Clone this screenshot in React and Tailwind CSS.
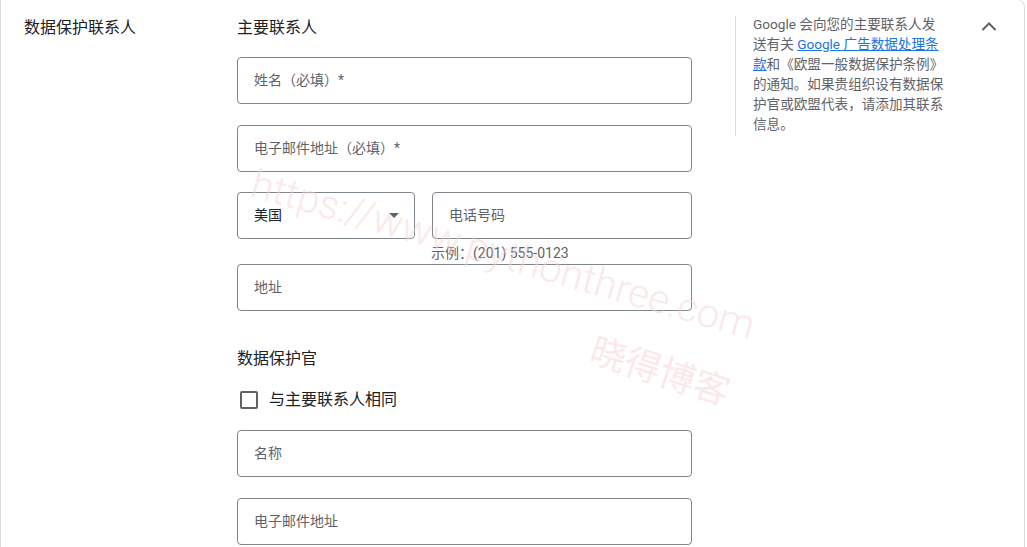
import { useState } from "react";

const font = { fontFamily: "Roboto, 'Noto Sans CJK SC', sans-serif" };

const Field = ({ label, className = "" }) => (
  <div
    className={`h-[47px] rounded border border-[#80868b] flex items-center px-4 text-[14px] text-[#5f6368] ${className}`}
  >
    {label}
  </div>
);

const App = () => {
  const [same, setSame] = useState(false);

  return (
    <div className="relative w-[1027px] h-[547px] bg-white overflow-hidden" style={font}>
      <div className="w-[1025px] h-[560px] bg-white border-l border-r border-[#dadce0] rounded-tr-lg shadow-[0_-1px_0_#eeeeee] flex">
        {/* left title */}
        <div className="w-[236px] pl-[23px] pt-[18px]">
          <h2 className="text-[16px] leading-5 text-[#202124]">数据保护联系人</h2>
        </div>

        {/* form */}
        <div className="w-[455px] pt-[18px] flex flex-col">
          <h3 className="text-[16px] leading-5 h-5 text-[#202124]">主要联系人</h3>
          <Field label="姓名（必填）*" className="mt-[19px]" />
          <Field label="电子邮件地址（必填）*" className="mt-[21px]" />
          <div className="flex gap-[17px] mt-[20px]">
            <div className="w-[178px] h-[47px] rounded border border-[#80868b] flex items-center justify-between pl-4 pr-[15px] text-[14px] text-[#202124]">
              <span>美国</span>
              <span className="w-0 h-0 border-l-[5px] border-r-[5px] border-t-[5px] border-l-transparent border-r-transparent border-t-[#5f6368]" />
            </div>
            <Field label="电话号码" className="flex-1" />
          </div>
          <div className="h-[25px] pt-[4px] pl-[194px] text-[14px] leading-5 text-[#5f6368]">
            示例：(201) 555-0123
          </div>
          <Field label="地址" />
          <h3 className="mt-[38px] text-[16px] leading-5 h-5 text-[#202124]">数据保护官</h3>
          <label className="mt-[21px] h-5 flex items-center gap-[11px] cursor-pointer">
            <button
              type="button"
              onClick={() => setSame(!same)}
              className="ml-[3px] w-[18px] h-[18px] rounded-[2px] border-2 border-[#5f6368] bg-white"
            />
            <span className="text-[16px] text-[#202124]">与主要联系人相同</span>
          </label>
          <Field label="名称" className="mt-[20px]" />
          <Field label="电子邮件地址" className="mt-[21px]" />
        </div>

        {/* help text */}
        <div className="ml-[43px] mt-[16px] h-[120px] border-l border-[#dadce0] pl-[17px]">
          <p className="w-[215px] -mt-[2px] text-[13.6px] leading-5 text-[#5f6368]">
            Google 会向您的主要联系人发
            <br />
            送有关{" "}
            <a href="#" className="text-[#1a73e8] underline">
              Google 广告数据处理条
              <br />款
            </a>
            和《欧盟一般数据保护条例》
            <br />
            的通知。如果贵组织设有数据保
            <br />
            护官或欧盟代表，请添加其联系
            <br />
            信息。
          </p>
        </div>

        <div className="ml-[13px] pt-[21px]">
          <svg width="16" height="10" viewBox="0 0 16 10" fill="none">
            <polyline points="1.5,9 8,2.5 14.5,9" stroke="#5f6368" strokeWidth="2" />
          </svg>
        </div>
      </div>

      {/* watermarks */}
      <div className="pointer-events-none absolute left-[503px] top-[255px] -translate-x-1/2 -translate-y-1/2 rotate-[16deg] whitespace-nowrap text-[40px] font-light text-[#f9d3d7] opacity-50">
        https://www.pythonthree.com
      </div>
      <div className="pointer-events-none absolute left-[660px] top-[372px] -translate-x-1/2 -translate-y-1/2 rotate-[18deg] whitespace-nowrap text-[36px] text-[#f9d3d7] opacity-50">
        晓得博客
      </div>
    </div>
  );
};

export default App;
